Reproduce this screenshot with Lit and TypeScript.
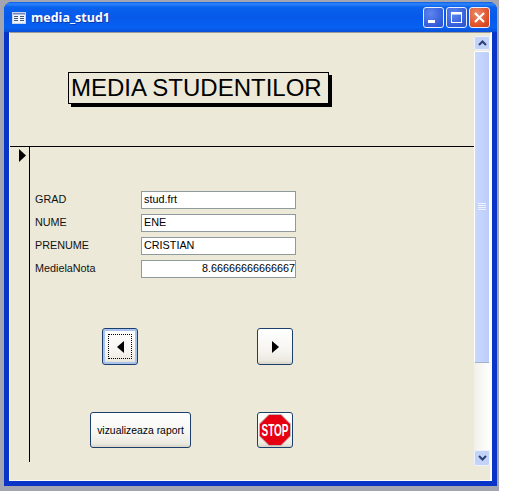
import { LitElement, html, css, svg } from "lit";
import { customElement } from "lit/decorators.js";

const fields = [
  { label: "GRAD", value: "stud.frt", num: false },
  { label: "NUME", value: "ENE", num: false },
  { label: "PRENUME", value: "CRISTIAN", num: false },
  { label: "MedielaNota", value: "8.66666666666667", num: true },
];

@customElement("app-root")
export class AppRoot extends LitElement {
  static styles = css`
    :host { display: block; width: 512px; height: 491px; background: #fff; overflow: hidden; font-family: "Liberation Sans", Arial, sans-serif; }
    .desktop { box-sizing: border-box; width: 499px; height: 491px; padding: 2px 2px 5px 4px; background: #a3a6b0; }
    .window { height: 484px; display: flex; flex-direction: column; border-radius: 8px 8px 0 0; background: #0a34c8; }
    .title { box-sizing: border-box; height: 30px; flex: none; display: flex; align-items: center; padding: 1px 7px 0 8px; border-radius: 8px 8px 0 0;
      background: linear-gradient(180deg, #0a5ae8 0, #2f87fb 2px, #0a62ee 5px, #0659ea 50%, #0660f2 85%, #0a50d6 100%); }
    .t-icon { width: 14px; height: 12px; flex: none; margin-right: 5px; }
    .t-text { flex: 1; color: #fff; font: bold 12.5px "Open Sans", sans-serif; text-shadow: 1px 1px 0 #0a3aa8; }
    .w-btn { width: 21px; height: 21px; flex: none; box-sizing: border-box; border: 1px solid #e8eefc; border-radius: 3px; margin-left: 2px; display: block;
      background: radial-gradient(circle at 35% 30%, #5d86f0 0, #3a62dc 60%, #2a4ed0 100%); }
    .w-btn svg { display: block; }
    .w-close { background: radial-gradient(circle at 35% 30%, #ea8a6c 0, #e0552c 60%, #c93c18 100%); }
    .inner { flex: 1; margin: 0 5px 5px; display: flex; background: #ece9d8; border-top: 1px solid #9a9a98; border-left: 1px solid #f8f8f2; border-right: 2px solid #fbfbf8; border-bottom: 1px solid #fbfbf8; }
    .form { width: 464px; flex: none; display: flex; flex-direction: column; }
    .header { box-sizing: border-box; height: 114px; flex: none; padding: 39px 0 0 58px; border-bottom: 1px solid #000; }
    .banner { box-sizing: border-box; width: 261px; height: 32px; border: 1px solid #000; box-shadow: 3px 3px 0 #000; background: #ece9d8; color: #000; font-size: 24px; line-height: 29px; padding-left: 2px; white-space: nowrap; }
    .detail { height: 315px; flex: none; display: flex; }
    .selector { box-sizing: border-box; width: 20px; flex: none; border-right: 1px solid #000; padding: 2px 0 0 9px; }
    .selector svg { display: block; }
    .body { flex: 1; padding-top: 44px; }
    .fields { display: grid; grid-template-columns: 106px 155px; grid-auto-rows: 18px; row-gap: 5px; padding-left: 5px; }
    .lbl { font-size: 10.8px; line-height: 17px; color: #111; white-space: nowrap; }
    .inp { box-sizing: border-box; border: 1px solid #8e9a9c; background: #fff; font-size: 10.8px; line-height: 15px; padding: 0 0 0 2px; color: #000; white-space: nowrap; overflow: hidden; }
    .num { text-align: right; padding: 0; }
    .row1 { display: flex; gap: 119px; padding: 50px 0 0 72px; }
    .row2 { display: flex; gap: 66px; padding: 47px 0 0 60px; }
    .btn { box-sizing: border-box; width: 36px; height: 37px; border: 1px solid #1d3f6e; border-radius: 3px; background: linear-gradient(180deg, #fff 0, #f6f5f0 60%, #ebe9e0 90%, #d8d4c6 100%); display: flex; align-items: center; justify-content: center; padding: 0; }
    .focus { box-shadow: inset 0 0 0 2px #a8c4ee; }
    .dots { box-sizing: border-box; width: 24px; height: 25px; border: 1px dotted #000; display: flex; align-items: center; justify-content: center; }
    .wide { width: 101px; height: 36px; font: 10.4px "Liberation Sans", sans-serif; color: #000; white-space: nowrap; }
    .stopbtn { height: 36px; }
    .rest { flex: 1; }
    .scroll { width: 16px; flex: none; display: flex; flex-direction: column; padding-top: 3px; height: 430px; }
    .s-btn { box-sizing: border-box; height: 14px; flex: none; border: 1px solid #eef2fe; border-radius: 2px; background: #c3d3f8; display: flex; align-items: center; justify-content: center; }
    .s-down { height: 16px; }
    .thumb { box-sizing: border-box; height: 312px; flex: none; margin-top: 1px; border: 1px solid #fff; border-bottom-color: #9fb0d0; border-radius: 2px; background: linear-gradient(90deg, #c9d8fd, #bccdfa); display: flex; align-items: center; justify-content: center; }
    .track { flex: 1; background: linear-gradient(90deg, #f1f0e8, #fff); }
    .grip { display: block; }
  `;

  private stopIcon() {
    return html`<svg width="32" height="32" viewBox="0 0 32 32">
      <polygon points="10,0.5 22,0.5 31.5,10 31.5,22 22,31.5 10,31.5 0.5,22 0.5,10" fill="#e60012" stroke="#b8b8b8"/>
      <text transform="translate(16 22) scale(1 1.6)" text-anchor="middle" fill="#fff" font-family="Liberation Sans" font-weight="bold" font-size="10">STOP</text>
    </svg>`;
  }

  render() {
    return html`
      <div class="desktop">
        <div class="window">
          <div class="title">
            <svg class="t-icon" viewBox="0 0 14 12">
              <rect x=".5" y=".5" width="13" height="11" fill="#eef2fb" stroke="#c8d2e8"/>
              <rect x="1" y="1" width="12" height="1.5" fill="#6f88c0"/>
              ${svg`<path d="M2 4.5h4M2 6.5h4M2 8.5h4M8 4.5h4M8 6.5h4M8 8.5h4" stroke="#44567c" fill="none"/>`}
            </svg>
            <span class="t-text">media_stud1</span>
            <span class="w-btn"><svg width="19" height="19"><rect x="4" y="12" width="7" height="3" fill="#fff"/></svg></span>
            <span class="w-btn"><svg width="19" height="19"><rect x="4.5" y="4.5" width="10" height="10" fill="none" stroke="#fff"/><rect x="4" y="4" width="11" height="2.5" fill="#fff"/></svg></span>
            <span class="w-btn w-close"><svg width="19" height="19"><path d="M5 5l9 9M14 5l-9 9" stroke="#fff" stroke-width="2.2"/></svg></span>
          </div>
          <div class="inner">
            <div class="form">
              <div class="header"><div class="banner">MEDIA STUDENTILOR</div></div>
              <div class="detail">
                <div class="selector"><svg width="7" height="13"><polygon points="0,0 7,6.5 0,13" fill="#000"/></svg></div>
                <div class="body">
                  <div class="fields">
                    ${fields.map(
                      (f) => html`<div class="lbl">${f.label}</div><div class="inp ${f.num ? "num" : ""}">${f.value}</div>`
                    )}
                  </div>
                  <div class="row1">
                    <div class="btn focus"><div class="dots"><svg width="7" height="12"><polygon points="7,0 0,6 7,12" fill="#000"/></svg></div></div>
                    <div class="btn"><svg width="7" height="12"><polygon points="0,0 7,6 0,12" fill="#000"/></svg></div>
                  </div>
                  <div class="row2">
                    <div class="btn wide">vizualizeaza raport</div>
                    <div class="btn stopbtn">${this.stopIcon()}</div>
                  </div>
                </div>
              </div>
              <div class="rest"></div>
            </div>
            <div class="scroll">
              <div class="s-btn"><svg width="9" height="6"><path d="M1 5l3.5-3.5L8 5" fill="none" stroke="#2a3f78" stroke-width="2"/></svg></div>
              <div class="thumb"><svg class="grip" width="8" height="8"><path d="M0 .5h8M0 2.5h8M0 4.5h8M0 6.5h8" stroke="#eef2fe"/></svg></div>
              <div class="track"></div>
              <div class="s-btn s-down"><svg width="9" height="6"><path d="M1 1l3.5 3.5L8 1" fill="none" stroke="#2a3f78" stroke-width="2"/></svg></div>
            </div>
          </div>
        </div>
      </div>
    `;
  }
}
